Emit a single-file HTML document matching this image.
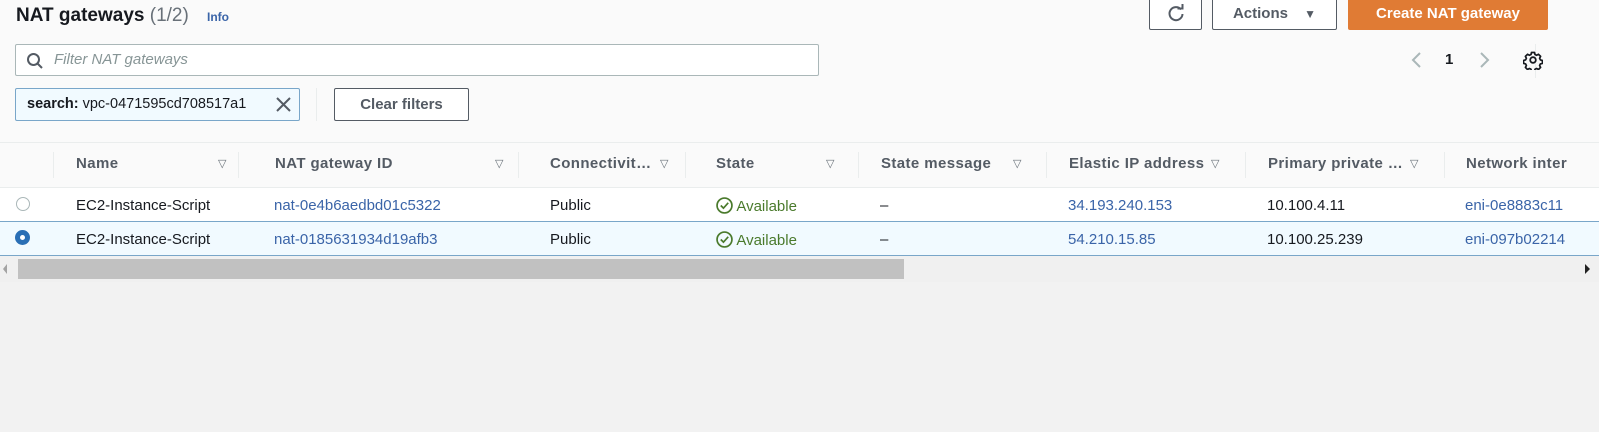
<!DOCTYPE html>
<html><head><style>
*{margin:0;padding:0;box-sizing:border-box}
body{width:1599px;height:432px;background:#f2f2f2;font-family:"Liberation Sans",sans-serif;font-size:15px;color:#16191f;position:relative;overflow:hidden}
.a{position:absolute;white-space:nowrap}
.top{position:absolute;left:0;top:0;width:1599px;height:142px;background:#fafafa}
.btn{position:absolute;border:1px solid #545b64;border-radius:2px;background:#fff;font-weight:bold;color:#545b64;text-align:center}
.hdr{position:absolute;left:0;top:142px;width:1599px;height:46px;background:#fafafa;border-top:1px solid #eaeded;border-bottom:1px solid #eaeded}
.row{position:absolute;left:0;width:1599px;height:34px;background:#fff}
.th{position:absolute;top:155px;font-weight:bold;color:#545b64;letter-spacing:0.4px}
.sep{position:absolute;top:152px;width:1px;height:26px;background:#eaeded}
.tri{position:absolute;top:157px;font-size:11px;color:#687078}
.lk{color:#3a64a8}
.av{color:#4a7a2c}
</style></head><body>
<div class="top"></div>
<div class="a" style="left:16px;top:5px;font-size:19px;font-weight:bold">NAT gateways <span style="font-weight:normal;color:#687078">(1/2)</span></div>
<div class="a" style="left:207px;top:10px;font-size:12px;font-weight:bold;color:#3a64a8">Info</div>
<div class="btn" style="left:1149px;top:-2px;width:53px;height:32px"><svg width="20" height="20" viewBox="0 0 20 20" style="margin-top:5px"><path d="M15 5.5A6.5 6.5 0 1 0 16.5 10" fill="none" stroke="#545b64" stroke-width="2"/><path d="M11.5 4.5h5v-5" fill="none" stroke="#545b64" stroke-width="2"/></svg></div>
<div class="btn" style="left:1212px;top:-2px;width:125px;height:32px;line-height:30px;font-size:15px">Actions <span style="font-size:12px;margin-left:12px">▼</span></div>
<div class="a" style="left:1348px;top:-2px;width:200px;height:32px;background:#e07b34;border-radius:2px;color:#fff;font-weight:bold;font-size:15px;text-align:center;line-height:32px">Create NAT gateway</div>
<div class="a" style="left:15px;top:44px;width:804px;height:32px;border:1px solid #aab7b8;background:#fff;border-radius:2px"></div>
<svg class="a" style="left:26px;top:52px" width="18" height="18" viewBox="0 0 18 18"><circle cx="7.5" cy="7.5" r="5.5" fill="none" stroke="#545b64" stroke-width="2"/><path d="M11.5 11.5l4.5 4.5" stroke="#545b64" stroke-width="2"/></svg>
<div class="a" style="left:54px;top:51px;font-style:italic;color:#879596">Filter NAT gateways</div>
<svg class="a" style="left:1410px;top:50px" width="14" height="20" viewBox="0 0 14 20"><path d="M10 3L3 10l7 7" fill="none" stroke="#aab7b8" stroke-width="2"/></svg>
<div class="a" style="left:1445px;top:51px;font-weight:bold">1</div>
<svg class="a" style="left:1477px;top:50px" width="14" height="20" viewBox="0 0 14 20"><path d="M4 3l7 7-7 7" fill="none" stroke="#aab7b8" stroke-width="2"/></svg>
<div class="a" style="left:1535px;top:44px;width:1px;height:34px;background:#eaeded"></div>
<svg class="a" style="left:1523px;top:50px" width="20" height="20" viewBox="0 0 20 20"><circle cx="10" cy="10" r="2.8" fill="none" stroke="#16191f" stroke-width="1.8"/><path d="M8.5 2.5h3l.5 2 1.6.8 1.9-1 2.1 2.1-1 1.9.8 1.6 2 .5v3l-2 .5-.8 1.6 1 1.9-2.1 2.1-1.9-1-1.6.8-.5 2h-3l-.5-2-1.6-.8-1.9 1-2.1-2.1 1-1.9-.8-1.6-2-.5v-3l2-.5.8-1.6-1-1.9 2.1-2.1 1.9 1 1.6-.8z" fill="none" stroke="#16191f" stroke-width="1.7" stroke-linejoin="round"/></svg>
<div class="a" style="left:15px;top:88px;width:285px;height:33px;border:1px solid #79a6c9;background:#f1faff;border-radius:2px"></div>
<div class="a" style="left:27px;top:96px;font-size:14.5px"><b>search:</b> vpc-0471595cd708517a1</div>
<svg class="a" style="left:275px;top:96px" width="17" height="17" viewBox="0 0 17 17"><path d="M2 2l13 13M15 2L2 15" stroke="#545b64" stroke-width="2"/></svg>
<div class="a" style="left:316px;top:88px;width:1px;height:33px;background:#eaeded"></div>
<div class="btn" style="left:334px;top:88px;width:135px;height:33px;line-height:31px;font-size:15px">Clear filters</div>
<div class="hdr"></div>
<div class="sep" style="left:53px"></div><div class="sep" style="left:238px"></div><div class="sep" style="left:518px"></div><div class="sep" style="left:685px"></div><div class="sep" style="left:858px"></div><div class="sep" style="left:1046px"></div><div class="sep" style="left:1245px"></div><div class="sep" style="left:1444px"></div>
<div class="th" style="left:76px">Name</div><div class="tri" style="left:218px">▽</div>
<div class="th" style="left:275px">NAT gateway ID</div><div class="tri" style="left:495px">▽</div>
<div class="th" style="left:550px">Connectivit…</div><div class="tri" style="left:660px">▽</div>
<div class="th" style="left:716px">State</div><div class="tri" style="left:826px">▽</div>
<div class="th" style="left:881px">State message</div><div class="tri" style="left:1013px">▽</div>
<div class="th" style="left:1069px">Elastic IP address</div><div class="tri" style="left:1211px">▽</div>
<div class="th" style="left:1268px">Primary private …</div><div class="tri" style="left:1410px">▽</div>
<div class="th" style="left:1466px">Network inter</div>
<div class="row" style="top:188px"></div>
<div class="row" style="top:221px;background:#f1faff;border-top:1px solid #79a6c9;border-bottom:1px solid #79a6c9;height:35px"></div>
<div class="a" style="left:16px;top:197px;width:14px;height:14px;border:1px solid #aab7b8;border-radius:50%;background:#fff"></div>
<div class="a" style="left:15px;top:230px;width:15px;height:15px;border-radius:50%;background:#2a6fb5"><div style="margin:5px;width:5px;height:5px;border-radius:50%;background:#fff"></div></div>
<div class="a" style="left:76px;top:197px">EC2-Instance-Script</div>
<div class="a lk" style="left:274px;top:197px">nat-0e4b6aedbd01c5322</div>
<div class="a" style="left:550px;top:197px">Public</div>
<div class="a av" style="left:716px;top:197px"><svg width="17" height="17" viewBox="0 0 16 16" style="vertical-align:-3px"><circle cx="8" cy="8" r="7" fill="none" stroke="#4a7a2c" stroke-width="1.6"/><path d="M4.5 8l2.5 2.5 4.5-5" fill="none" stroke="#4a7a2c" stroke-width="1.6"/></svg> Available</div>
<div class="a" style="left:880px;top:197px">–</div>
<div class="a lk" style="left:1068px;top:197px">34.193.240.153</div>
<div class="a" style="left:1267px;top:197px">10.100.4.11</div>
<div class="a lk" style="left:1465px;top:197px">eni-0e8883c11</div>
<div class="a" style="left:76px;top:231px">EC2-Instance-Script</div>
<div class="a lk" style="left:274px;top:231px">nat-0185631934d19afb3</div>
<div class="a" style="left:550px;top:231px">Public</div>
<div class="a av" style="left:716px;top:231px"><svg width="17" height="17" viewBox="0 0 16 16" style="vertical-align:-3px"><circle cx="8" cy="8" r="7" fill="none" stroke="#4a7a2c" stroke-width="1.6"/><path d="M4.5 8l2.5 2.5 4.5-5" fill="none" stroke="#4a7a2c" stroke-width="1.6"/></svg> Available</div>
<div class="a" style="left:880px;top:231px">–</div>
<div class="a lk" style="left:1068px;top:231px">54.210.15.85</div>
<div class="a" style="left:1267px;top:231px">10.100.25.239</div>
<div class="a lk" style="left:1465px;top:231px">eni-097b02214</div>
<div class="a" style="left:0;top:256px;width:1599px;height:26px;background:#f0f0f0"></div>
<div class="a" style="left:18px;top:259px;width:886px;height:20px;background:#c1c1c1"></div>
<div class="a" style="left:3px;top:264px;width:0;height:0;border-top:5px solid transparent;border-bottom:5px solid transparent;border-right:4px solid #a3a3a3"></div>
<div class="a" style="left:1585px;top:264px;width:0;height:0;border-top:5px solid transparent;border-bottom:5px solid transparent;border-left:5px solid #222"></div>
</body></html>
